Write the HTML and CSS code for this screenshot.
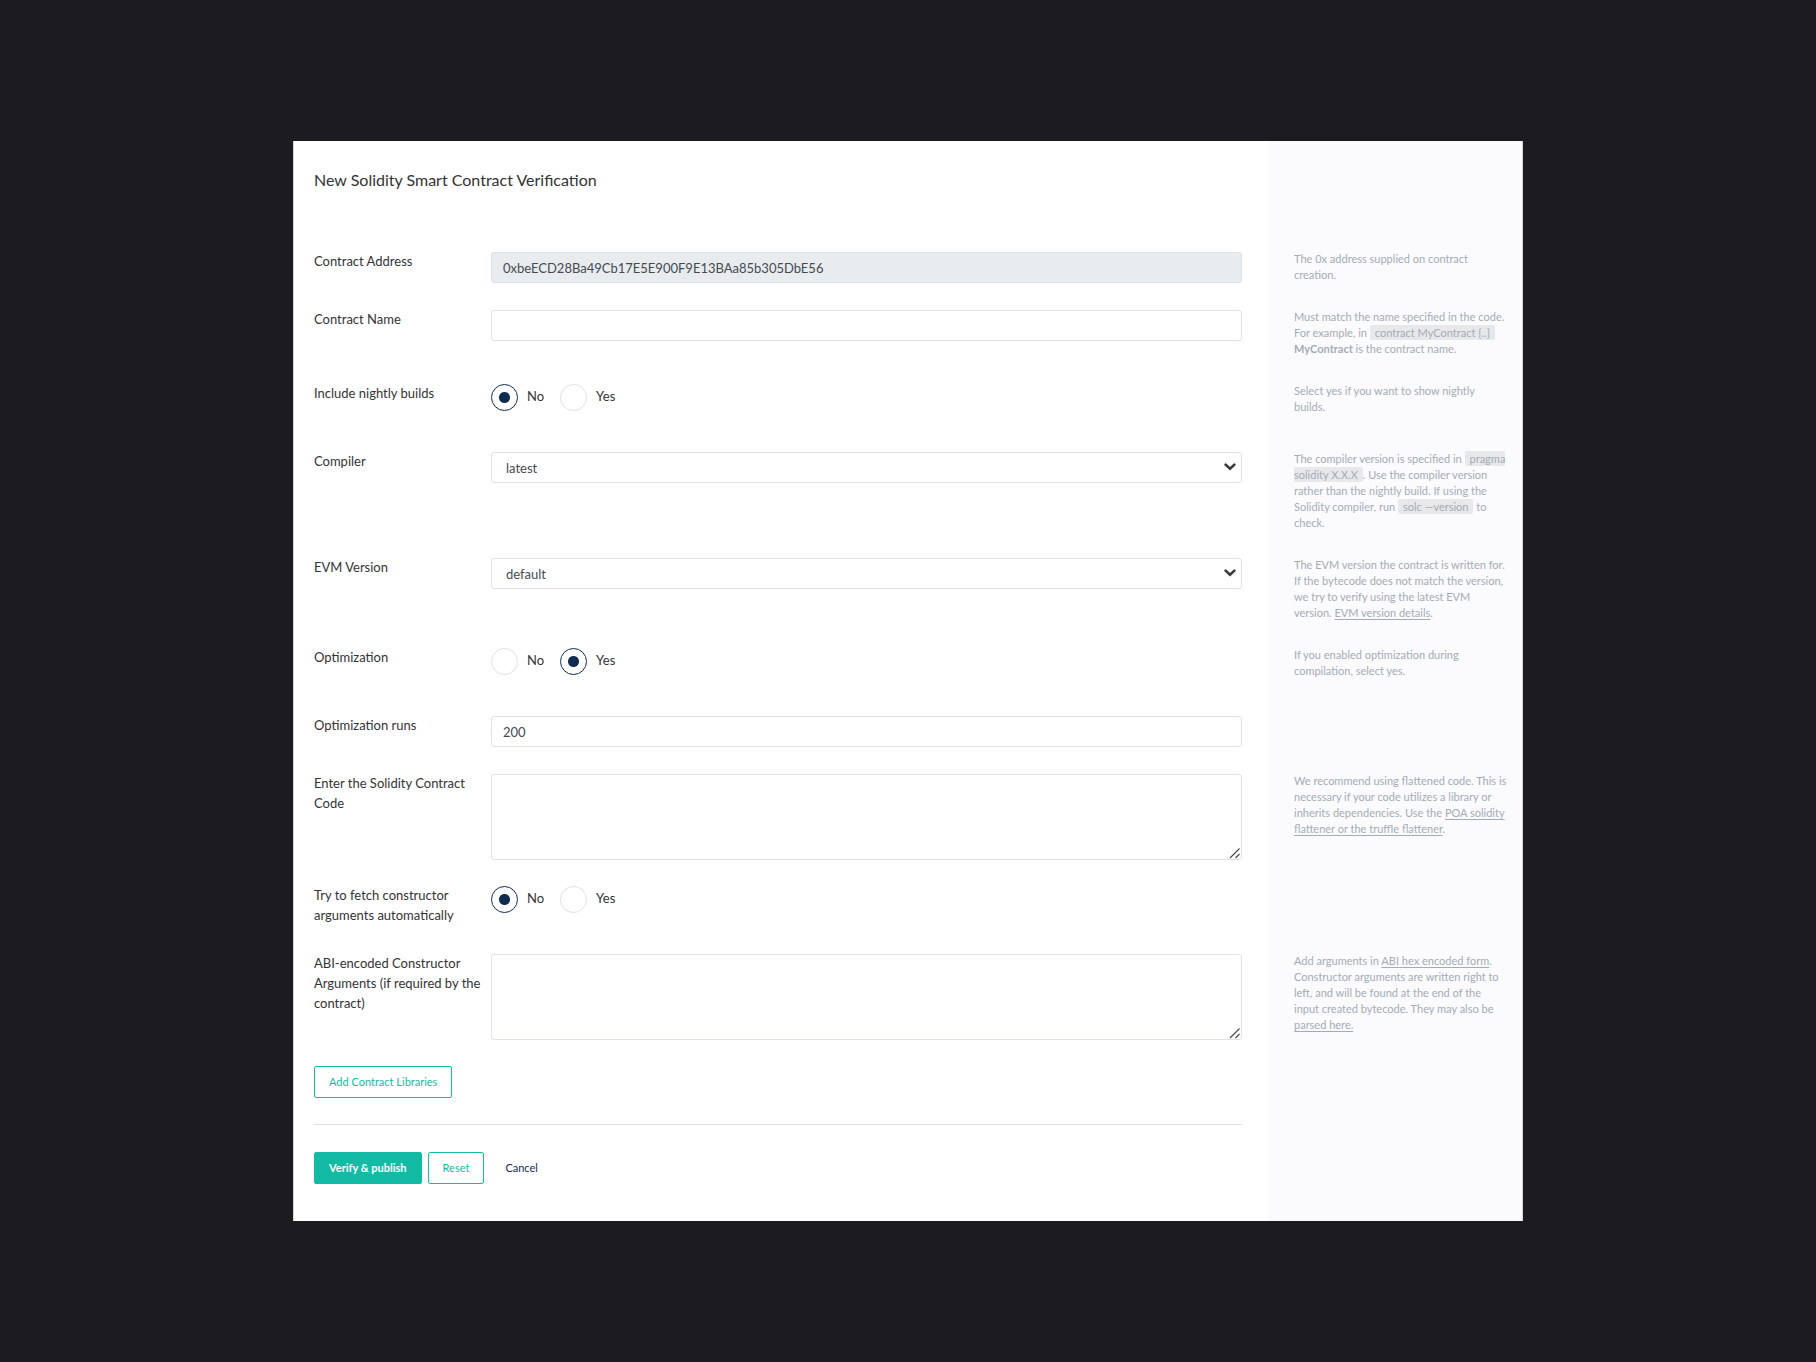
FILE: index.html
```html
<!DOCTYPE html>
<html lang="en">
<head>
<meta charset="utf-8">
<meta name="viewport" content="width=device-width, initial-scale=1">
<title>New Solidity Smart Contract Verification</title>
<link rel="stylesheet" href="styles.css">
</head>
<body>
<main class="card">
  <h1 class="title">New Solidity Smart Contract Verification</h1>
  <form class="form">
    <div class="row">
      <label class="label" for="address">Contract Address</label>
      <input class="control" id="address" type="text" value="0xbeECD28Ba49Cb17E5E900F9E13BAa85b305DbE56" readonly>
      <p class="help">The 0x address supplied on contract creation.</p>
    </div>
    <div class="row">
      <label class="label" for="name">Contract Name</label>
      <input class="control" id="name" type="text">
      <p class="help">Must match the name specified in the code. For example, in <code class="code">contract MyContract {..}</code> <strong>MyContract</strong> is the contract name.</p>
    </div>
    <div class="row row-radio" role="radiogroup" aria-labelledby="nightly-label">
      <span class="label" id="nightly-label">Include nightly builds</span>
      <div class="radios">
        <label class="option"><input class="radio" type="radio" name="nightly" checked><span class="option-text">No</span></label>
        <label class="option"><input class="radio" type="radio" name="nightly"><span class="option-text">Yes</span></label>
      </div>
      <p class="help">Select yes if you want to show nightly builds.</p>
    </div>
    <div class="row">
      <label class="label" for="compiler">Compiler</label>
      <div class="select">
        <select class="control" id="compiler"><option>latest</option></select>
        <svg class="chevron" viewBox="0 0 12 8" aria-hidden="true"><path d="M1.6 1.6 6 5.8l4.4-4.2"/></svg>
      </div>
      <p class="help">The compiler version is specified in <code class="code">pragma solidity X.X.X</code>. Use the compiler version rather than the nightly build. If using the Solidity compiler, run <code class="code">solc —version</code> to check.</p>
    </div>
    <div class="row">
      <label class="label" for="evm">EVM Version</label>
      <div class="select">
        <select class="control" id="evm"><option>default</option></select>
        <svg class="chevron" viewBox="0 0 12 8" aria-hidden="true"><path d="M1.6 1.6 6 5.8l4.4-4.2"/></svg>
      </div>
      <p class="help">The EVM version the contract is written for. If the bytecode does not match the version, we try to verify using the latest EVM version. <a class="link" href="#">EVM version details</a>.</p>
    </div>
    <div class="row row-radio" role="radiogroup" aria-labelledby="optimization-label">
      <span class="label" id="optimization-label">Optimization</span>
      <div class="radios">
        <label class="option"><input class="radio" type="radio" name="optimization"><span class="option-text">No</span></label>
        <label class="option"><input class="radio" type="radio" name="optimization" checked><span class="option-text">Yes</span></label>
      </div>
      <p class="help">If you enabled optimization during compilation, select yes.</p>
    </div>
    <div class="row">
      <label class="label" for="runs">Optimization runs</label>
      <input class="control" id="runs" type="text" value="200">
    </div>
    <div class="row">
      <label class="label" for="source">Enter the Solidity Contract Code</label>
      <textarea class="control area" id="source"></textarea>
      <p class="help">We recommend using flattened code. This is necessary if your code utilizes a library or inherits dependencies. Use the <a class="link" href="#">POA solidity flattener or the truffle flattener</a>.</p>
    </div>
    <div class="row row-radio" role="radiogroup" aria-labelledby="fetch-label">
      <span class="label" id="fetch-label">Try to fetch constructor arguments automatically</span>
      <div class="radios">
        <label class="option"><input class="radio" type="radio" name="fetch" checked><span class="option-text">No</span></label>
        <label class="option"><input class="radio" type="radio" name="fetch"><span class="option-text">Yes</span></label>
      </div>
    </div>
    <div class="row">
      <label class="label" for="arguments">ABI-encoded Constructor Arguments (if required by the contract)</label>
      <textarea class="control area" id="arguments"></textarea>
      <p class="help">Add arguments in <a class="link" href="#">ABI hex encoded form</a>. Constructor arguments are written right to left, and will be found at the end of the input created bytecode. They may also be <a class="link" href="#">parsed here.</a></p>
    </div>
    <div class="actions">
      <button class="button" type="button">Add Contract Libraries</button>
    </div>
    <hr class="rule">
    <div class="actions">
      <button class="button button-primary" type="submit">Verify &amp; publish</button>
      <button class="button" type="reset">Reset</button>
      <a class="cancel" href="#">Cancel</a>
    </div>
  </form>
</main>
</body>
</html>
```
FILE: styles.css
```css
* {
  box-sizing: border-box;
}

body {
  margin: 0;
  min-height: 100vh;
  padding: 40px;
  display: flex;
  align-items: center;
  justify-content: center;
  background: #1c1b20;
  color: #333;
  font: 13px/20px Lato, "Open Sans", sans-serif;
}

.card {
  --aside: 254px;
  width: 100%;
  max-width: 1230px;
  padding: 27px 0 37px;
  border-left: 1px solid #d5d6d8;
  border-right: 1px solid #d5d6d8;
  background: linear-gradient(to left, #fbfbfd var(--aside), #fff var(--aside));
}

.title {
  margin: 0 0 60px;
  padding: 0 20px;
  font-size: 16px;
  line-height: 24px;
  font-weight: 400;
}

.form {
  display: flex;
  flex-direction: column;
  gap: 26px;
}

.row {
  display: grid;
  grid-template-columns: 177px minmax(0, 1fr) 52px 214px;
  align-items: start;
  min-height: 32px;
  padding: 0 14px 0 20px;
}

.row-radio {
  min-height: 42px;
}

.label,
.help {
  margin: -1px 0 1px;
}

.label {
  padding-right: 10px;
}

.help {
  grid-column: 4;
  color: #a3acb5;
  font-size: 11px;
  line-height: 16px;
}

.control {
  display: block;
  width: 100%;
  height: 31px;
  padding: 0 11px;
  border: 1px solid #dfe1ea;
  border-radius: 3px;
  background: #fff;
  color: #444a52;
  font: inherit;
}

.control[readonly] {
  background: #e8ecef;
}

.area {
  height: 86px;
  padding: 6px 11px;
  resize: vertical;
}

.area::-webkit-resizer {
  background: url("data:image/svg+xml,%3Csvg xmlns='http://www.w3.org/2000/svg' width='15' height='15'%3E%3Cpath d='M4 14 13.5 4.5M9.5 14l4-4' stroke='%23444' stroke-width='1.1'/%3E%3C/svg%3E") no-repeat right bottom;
}

.select {
  position: relative;
}

.select .control {
  appearance: none;
  padding: 0 30px 0 14px;
}

.chevron {
  position: absolute;
  top: 11px;
  right: 6px;
  width: 12px;
  height: 8px;
  fill: none;
  stroke: #343a40;
  stroke-width: 2.6;
  stroke-linecap: round;
  pointer-events: none;
}

.code {
  padding: 1px 5px;
  border-radius: 2px;
  background: #e8e8ea;
  font: inherit;
}

.link {
  color: inherit;
  text-underline-offset: 2px;
}

.radios {
  display: flex;
  gap: 16px;
}

.option {
  display: flex;
  gap: 9px;
}

.option-text {
  padding-top: 2px;
}

.radio {
  appearance: none;
  width: 27px;
  height: 27px;
  margin: 0;
  border: 1px solid #dfe1ea;
  border-radius: 50%;
}

.radio:checked {
  border-color: #0f2b50;
  background: radial-gradient(circle, #0f2b50 5px, transparent 6px);
}

.actions {
  display: flex;
  gap: 6px;
  padding: 0 20px;
}

.button {
  height: 32px;
  padding: 0 14px;
  border: 1px solid #13bba4;
  border-radius: 2px;
  background: #fff;
  color: #13bba4;
  font: 11px/16px Lato, "Open Sans", sans-serif;
}

.button-primary {
  background: #13bba4;
  color: #fff;
  font-weight: 700;
}

.cancel {
  padding: 8px 15px;
  color: #0f2b50;
  font-size: 11px;
  line-height: 16px;
  text-decoration: none;
}

.rule {
  width: auto;
  height: 1px;
  margin: 0 280px 1px 20px;
  border: 0;
  background: #dfe1ea;
}
```
